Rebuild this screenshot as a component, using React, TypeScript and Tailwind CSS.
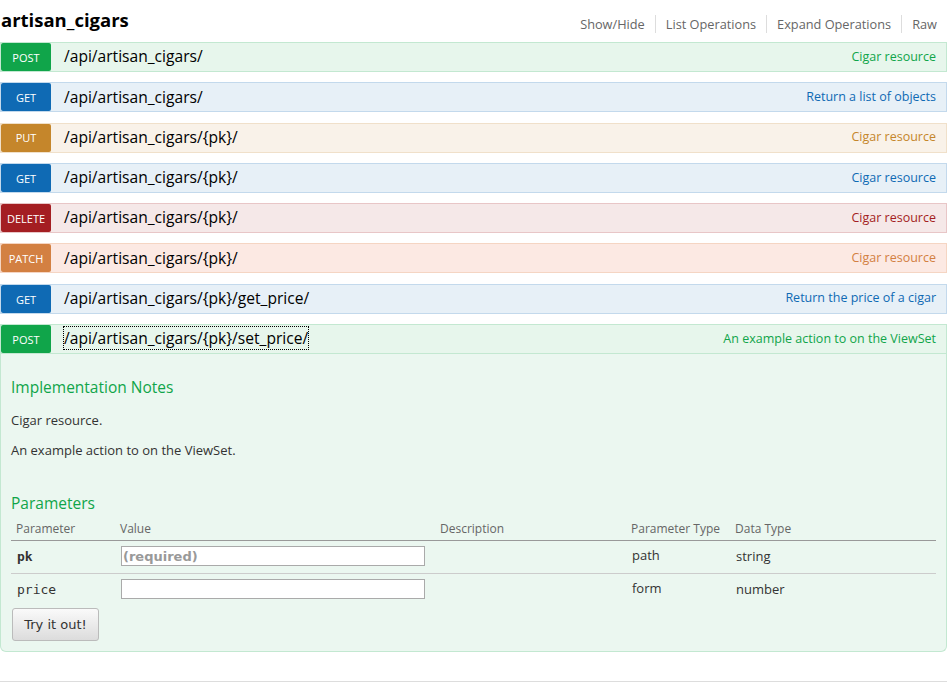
import React from "react";

type Op = {
  method: string;
  path: string;
  summary: string;
  bar: string;
  badge: string;
  text: string;
};

const ops: Op[] = [
  { method: "POST", path: "/api/artisan_cigars/", summary: "Cigar resource", bar: "bg-[#e7f6ec] border-[#c3e8d1]", badge: "bg-[#10a54a]", text: "text-[#10a54a]" },
  { method: "GET", path: "/api/artisan_cigars/", summary: "Return a list of objects", bar: "bg-[#e7f0f7] border-[#c3d9ec]", badge: "bg-[#0f6ab4]", text: "text-[#0f6ab4]" },
  { method: "PUT", path: "/api/artisan_cigars/{pk}/", summary: "Cigar resource", bar: "bg-[#f9f2e9] border-[#f0e0ca]", badge: "bg-[#c5862b]", text: "text-[#c5862b]" },
  { method: "GET", path: "/api/artisan_cigars/{pk}/", summary: "Cigar resource", bar: "bg-[#e7f0f7] border-[#c3d9ec]", badge: "bg-[#0f6ab4]", text: "text-[#0f6ab4]" },
  { method: "DELETE", path: "/api/artisan_cigars/{pk}/", summary: "Cigar resource", bar: "bg-[#f5e8e8] border-[#e8c6c7]", badge: "bg-[#a41e22]", text: "text-[#a41e22]" },
  { method: "PATCH", path: "/api/artisan_cigars/{pk}/", summary: "Cigar resource", bar: "bg-[#fce9e3] border-[#f5d5c3]", badge: "bg-[#d38042]", text: "text-[#d38042]" },
  { method: "GET", path: "/api/artisan_cigars/{pk}/get_price/", summary: "Return the price of a cigar", bar: "bg-[#e7f0f7] border-[#c3d9ec]", badge: "bg-[#0f6ab4]", text: "text-[#0f6ab4]" },
];

const Heading = ({ op, focused }: { op: Op; focused?: boolean }) => (
  <div className={`flex items-center h-[30px] border ${op.bar}`}>
    <span
      className={`w-[50px] h-[28px] flex items-center justify-center text-[11px] text-white rounded-[2px] pt-[2px] ${op.badge}`}
    >
      {op.method}
    </span>
    <span className="pl-[13px] text-[15.6px] text-black">
      <span className={focused ? "outline-1 outline-dotted outline-black" : ""}>{op.path}</span>
    </span>
    <span className={`ml-auto pr-[10px] text-[12.5px] ${op.text}`}>{op.summary}</span>
  </div>
);

const cols = "grid grid-cols-[104px_320px_191px_104px_1fr]";

const App = () => {
  const post: Op = {
    method: "POST",
    path: "/api/artisan_cigars/{pk}/set_price/",
    summary: "An example action to on the ViewSet",
    bar: "bg-[#e7f6ec] border-[#c3e8d1]",
    badge: "bg-[#10a54a]",
    text: "text-[#10a54a]",
  };

  return (
    <div className="w-[947px] h-[683px] overflow-hidden bg-white font-['Open_Sans',sans-serif] text-[#333]">
      <div className="flex items-start h-[42px]">
        <h2 className="pl-[1px] pt-[8px] text-[18.5px] font-bold text-black leading-[24px]">artisan_cigars</h2>
        <ul className="ml-auto pt-[15px] flex text-[12.75px] text-[#666]">
          {["Show/Hide", "List Operations", "Expand Operations", "Raw"].map((t, i, a) => (
            <li
              key={t}
              className={`px-[10px] leading-[18px] ${i < a.length - 1 ? "border-r border-[#ddd]" : ""}`}
            >
              {t}
            </li>
          ))}
        </ul>
      </div>

      <div className="flex flex-col gap-[10.3px]">
        {ops.map((op, i) => (
          <Heading key={i} op={op} />
        ))}

        <div>
          <Heading op={post} focused />
          <div className="bg-[#ebf7f0] border border-t-0 border-[#c3e8d1] rounded-b-[6px] px-[10px] pt-[23px] pb-[10px]">
            <h4 className="text-[15.5px] text-[#10a54a] leading-[20px]">Implementation Notes</h4>
            <p className="mt-[13px] text-[13px] leading-[20px]">Cigar resource.</p>
            <p className="mt-[10px] text-[13px] leading-[20px]">An example action to on the ViewSet.</p>

            <h4 className="mt-[33px] text-[15.5px] text-[#10a54a] leading-[20px]">Parameters</h4>
            <div className={`mt-[8px] ${cols} text-[12px] text-[#666] border-b border-[#999] leading-[16px]`}>
              <div className="px-[5px] pb-[3px]">Parameter</div>
              <div className="px-[5px] pb-[3px]">Value</div>
              <div className="px-[5px] pb-[3px]">Description</div>
              <div className="px-[5px] pb-[3px]">Parameter Type</div>
              <div className="px-[5px] pb-[3px]">Data Type</div>
            </div>
            <div className={`${cols} text-[13px] border-b border-[#ccc] h-[33px] items-start`}>
              <div className="px-[6px] pt-[6px] font-['DejaVu_Sans_Mono',monospace] font-bold text-[13px] text-[#333]">pk</div>
              <div className="px-[6px] pt-[5px]">
                <input
                  className="w-[304px] h-[20px] bg-white border border-[#aaa] px-[1px] font-['DejaVu_Sans',sans-serif] font-bold text-[13px] placeholder:text-[#999] outline-none"
                  placeholder="(required)"
                />
              </div>
              <div />
              <div className="px-[6px] pt-[5px]">path</div>
              <div className="px-[6px] pt-[6px]">string</div>
            </div>
            <div className={`${cols} text-[13px] h-[34px] items-start`}>
              <div className="px-[6px] pt-[6px] font-['DejaVu_Sans_Mono',monospace] text-[13px] text-[#333]">price</div>
              <div className="px-[6px] pt-[5px]">
                <input className="w-[304px] h-[20px] bg-white border border-[#aaa] outline-none" />
              </div>
              <div />
              <div className="px-[6px] pt-[5px]">form</div>
              <div className="px-[6px] pt-[6px]">number</div>
            </div>
            <button className="ml-[1px] w-[87px] h-[33px] rounded-[3px] border border-[#bbb] bg-gradient-to-b from-[#fafafa] to-[#dcdcdc] font-['DejaVu_Sans',sans-serif] text-[13px] text-[#333]">
              Try it out!
            </button>
          </div>
        </div>
      </div>

      <div className="mt-[29px] border-t border-[#ddd]" />
    </div>
  );
};

export default App;
